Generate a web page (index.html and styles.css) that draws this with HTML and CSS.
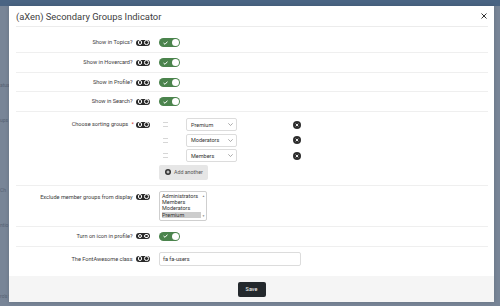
FILE: index.html
```html
<!DOCTYPE html>
<html lang="en">
<head>
    <meta charset="UTF-8">
    <title>(aXen) Secondary Groups Indicator</title>
    <link rel="stylesheet" href="styles.css">
</head>
<body>
    <div class="page">
        <div class="page-top"></div>
        <div class="page-side">
            <span class="ghost g1">atus</span>
            <span class="ghost g2">ups</span>
            <span class="ghost g3">Ch</span>
            <span class="ghost g4">ntio</span>
            <span class="ghost g5">ro's t</span>
        </div>
    </div>

    <div class="modal">
        <div class="modal-head">
            <h1 class="modal-title">(aXen) Secondary Groups Indicator</h1>
            <svg class="close" width="6" height="6" viewBox="0 0 6 6"><path d="M0.5 0.5L5.5 5.5M5.5 0.5L0.5 5.5" stroke="#333" stroke-width="1"/></svg>
        </div>

        <div class="modal-body">
            <div class="row">
                <div class="label">Show in Topics? <span class="hint"><i></i><i></i></span></div>
                <div class="field"><span class="toggle"><svg width="5" height="4" viewBox="0 0 5 4"><path d="M0.5 2L2 3.3L4.5 0.6" stroke="#fff" stroke-width="1" fill="none"/></svg><b></b></span></div>
            </div>
            <div class="row">
                <div class="label">Show in Hovercard? <span class="hint"><i></i><i></i></span></div>
                <div class="field"><span class="toggle"><svg width="5" height="4" viewBox="0 0 5 4"><path d="M0.5 2L2 3.3L4.5 0.6" stroke="#fff" stroke-width="1" fill="none"/></svg><b></b></span></div>
            </div>
            <div class="row row-short">
                <div class="label">Show in Profile? <span class="hint"><i></i><i></i></span></div>
                <div class="field"><span class="toggle"><svg width="5" height="4" viewBox="0 0 5 4"><path d="M0.5 2L2 3.3L4.5 0.6" stroke="#fff" stroke-width="1" fill="none"/></svg><b></b></span></div>
            </div>
            <div class="row">
                <div class="label">Show in Search? <span class="hint"><i></i><i></i></span></div>
                <div class="field"><span class="toggle"><svg width="5" height="4" viewBox="0 0 5 4"><path d="M0.5 2L2 3.3L4.5 0.6" stroke="#fff" stroke-width="1" fill="none"/></svg><b></b></span></div>
            </div>

            <div class="row row-top">
                <div class="label label-tall">Choose sorting groups <em>*</em> <span class="hint"><i></i><i></i></span></div>
                <div class="field sorter">
                    <div class="sort-item">
                        <span class="handle"></span>
                        <span class="select">Premium <svg width="5" height="3" viewBox="0 0 5 3"><path d="M0.3 0.3L2.5 2.5L4.7 0.3" stroke="#888" stroke-width="0.7" fill="none"/></svg></span>
                        <span class="remove"><svg width="4" height="4" viewBox="0 0 4 4"><path d="M0.7 0.7L3.3 3.3M3.3 0.7L0.7 3.3" stroke="#fff" stroke-width="0.9"/></svg></span>
                    </div>
                    <div class="sort-item">
                        <span class="handle"></span>
                        <span class="select">Moderators <svg width="5" height="3" viewBox="0 0 5 3"><path d="M0.3 0.3L2.5 2.5L4.7 0.3" stroke="#888" stroke-width="0.7" fill="none"/></svg></span>
                        <span class="remove"><svg width="4" height="4" viewBox="0 0 4 4"><path d="M0.7 0.7L3.3 3.3M3.3 0.7L0.7 3.3" stroke="#fff" stroke-width="0.9"/></svg></span>
                    </div>
                    <div class="sort-item">
                        <span class="handle"></span>
                        <span class="select">Members <svg width="5" height="3" viewBox="0 0 5 3"><path d="M0.3 0.3L2.5 2.5L4.7 0.3" stroke="#888" stroke-width="0.7" fill="none"/></svg></span>
                        <span class="remove"><svg width="4" height="4" viewBox="0 0 4 4"><path d="M0.7 0.7L3.3 3.3M3.3 0.7L0.7 3.3" stroke="#fff" stroke-width="0.9"/></svg></span>
                    </div>
                    <span class="add-btn"><svg width="6" height="6" viewBox="0 0 6 6"><circle cx="3" cy="3" r="3" fill="#333"/><path d="M3 1.5V4.5M1.5 3H4.5" stroke="#fff" stroke-width="0.9"/></svg>Add another</span>
                </div>
            </div>

            <div class="row row-top">
                <div class="label label-list">Exclude member groups from display <span class="hint"><i></i><i></i></span></div>
                <div class="field">
                    <div class="listbox">
                        <div class="options">
                            <span>Administrators</span>
                            <span>Members</span>
                            <span>Moderators</span>
                            <span class="picked">Premium</span>
                        </div>
                        <div class="scroll"><span>&#9650;</span><span>&#9660;</span></div>
                    </div>
                </div>
            </div>

            <div class="row">
                <div class="label">Turn on icon in profile? <span class="hint"><i></i><i></i></span></div>
                <div class="field"><span class="toggle"><svg width="5" height="4" viewBox="0 0 5 4"><path d="M0.5 2L2 3.3L4.5 0.6" stroke="#fff" stroke-width="1" fill="none"/></svg><b></b></span></div>
            </div>

            <div class="row row-last">
                <div class="label label-input">The FontAwesome class <span class="hint"><i></i><i></i></span></div>
                <div class="field"><span class="text-input">fa fa-users</span></div>
            </div>
        </div>

        <div class="modal-foot">
            <span class="save-btn">Save</span>
        </div>
    </div>
</body>
</html>
```

FILE: styles.css
```css
body {
    margin: 0;
    width: 500px;
    height: 306px;
    overflow: hidden;
    background: #788597;
    font-family: Roboto, 'Liberation Sans', Arial, sans-serif;
    color: #333;
}
.page-top {
    height: 6px;
    background: #4a6483;
}
.page-side {
    display: flex;
    flex-direction: column;
    width: 9px;
    overflow: hidden;
}
.ghost {
    font-size: 5px;
    line-height: 8px;
    color: #566273;
    white-space: nowrap;
}
.g1 { margin-top: 75px; }
.g2 { margin-top: 27px; }
.g3 { margin-top: 62px; }
.g4 { margin-top: 27px; }
.g5 { margin-top: 63px; }

/* modal window sits above the dimmed page */
.modal {
    position: absolute;
    left: 9px;
    top: 6px;
    width: 485px;
    height: 296px;
    background: #fff;
    display: flex;
    flex-direction: column;
    box-shadow: 0 0 4px rgba(0,0,0,0.15);
}
.modal-head {
    margin: 0 6px 0 7px;
    height: 21px;
    box-sizing: border-box;
    border-bottom: 1px solid #ececec;
    display: flex;
    align-items: center;
    justify-content: space-between;
}
.modal-title {
    margin: 0;
    font-size: 9.4px;
    font-weight: 400;
    color: #3d3d3d;
}
.close {
    margin-right: 1px;
}
.modal-body {
    flex: 1;
    margin: 0 6px 0 7px;
    padding-top: 6px;
}
.row {
    display: grid;
    grid-template-columns: 134px 1fr;
    column-gap: 9px;
    align-items: center;
    padding: 5px 0;
    border-bottom: 1px solid #efefef;
}
.row-short {
    padding: 5px 0 4px;
}
.row-top {
    align-items: start;
}
.row-last {
    border-bottom: none;
}
.row-top:nth-of-type(5) {
    padding-top: 6px;
}
.label {
    display: flex;
    justify-content: flex-end;
    align-items: center;
    gap: 2px;
    font-size: 5.6px;
    line-height: 9px;
    color: #3a3a3a;
    white-space: pre;
}
.label em {
    font-style: normal;
    color: #c33;
}
.label-tall {
    line-height: 13px;
}
.label-list {
    line-height: 12px;
}
.label-input {
    line-height: 14px;
}
.hint {
    display: inline-flex;
    align-items: center;
    justify-content: center;
    gap: 2px;
    width: 14px;
    height: 6px;
    border-radius: 3px;
    background: #2a2a2a;
}
.hint i {
    width: 2.5px;
    height: 2.5px;
    border: 0.8px solid #fff;
    border-radius: 50%;
}
.field {
    display: flex;
}
.toggle {
    display: flex;
    align-items: center;
    justify-content: space-between;
    width: 21px;
    height: 9px;
    box-sizing: border-box;
    padding: 0 1px 0 4px;
    border-radius: 5px;
    background: #4b844d;
}
.toggle b {
    width: 7px;
    height: 7px;
    border-radius: 50%;
    background: #fff;
}
.sorter {
    flex-direction: column;
    gap: 2.5px;
}
.sort-item {
    display: flex;
    align-items: center;
    height: 13px;
}
.handle {
    width: 5px;
    height: 3px;
    margin: 0 18px 0 4px;
    border-top: 1px solid #d6d6d6;
    border-bottom: 1px solid #d6d6d6;
}
.select {
    display: flex;
    align-items: center;
    justify-content: space-between;
    width: 51px;
    height: 13px;
    box-sizing: border-box;
    padding: 0 3px 0 4px;
    border: 1px solid #dcdcdc;
    border-radius: 2px;
    font-size: 5.5px;
    color: #333;
}
.remove {
    display: flex;
    align-items: center;
    justify-content: center;
    width: 8px;
    height: 8px;
    margin-left: 56px;
    border-radius: 50%;
    background: #2e2e2e;
}
.add-btn {
    display: flex;
    align-items: center;
    gap: 3px;
    width: 49px;
    height: 15px;
    box-sizing: border-box;
    padding-left: 6px;
    border-radius: 2px;
    background: #e6e6e6;
    font-size: 5.3px;
    color: #555;
}
.listbox {
    display: flex;
    width: 48px;
    height: 30px;
    box-sizing: border-box;
    border: 1px solid #cfcfcf;
    border-radius: 2px;
}
.options {
    flex: 1;
    display: flex;
    flex-direction: column;
    padding: 1px 0 0 2px;
    font-size: 5.5px;
    line-height: 6.4px;
    color: #333;
}
.options .picked {
    background: #cdcdcd;
}
.scroll {
    display: flex;
    flex-direction: column;
    justify-content: space-between;
    width: 5px;
    padding: 2px 0;
    font-size: 3px;
    color: #888;
    text-align: center;
}
.text-input {
    display: flex;
    align-items: center;
    width: 142px;
    height: 14px;
    box-sizing: border-box;
    padding-left: 3px;
    border: 1px solid #dcdcdc;
    border-radius: 2px;
    font-size: 5.6px;
    color: #333;
}
.modal-foot {
    height: 26px;
    background: #f5f5f5;
    display: flex;
    align-items: center;
    justify-content: center;
}
.save-btn {
    display: flex;
    align-items: center;
    justify-content: center;
    width: 28px;
    height: 15px;
    border-radius: 2px;
    background: #24292d;
    color: #fff;
    font-size: 5.5px;
}
```
